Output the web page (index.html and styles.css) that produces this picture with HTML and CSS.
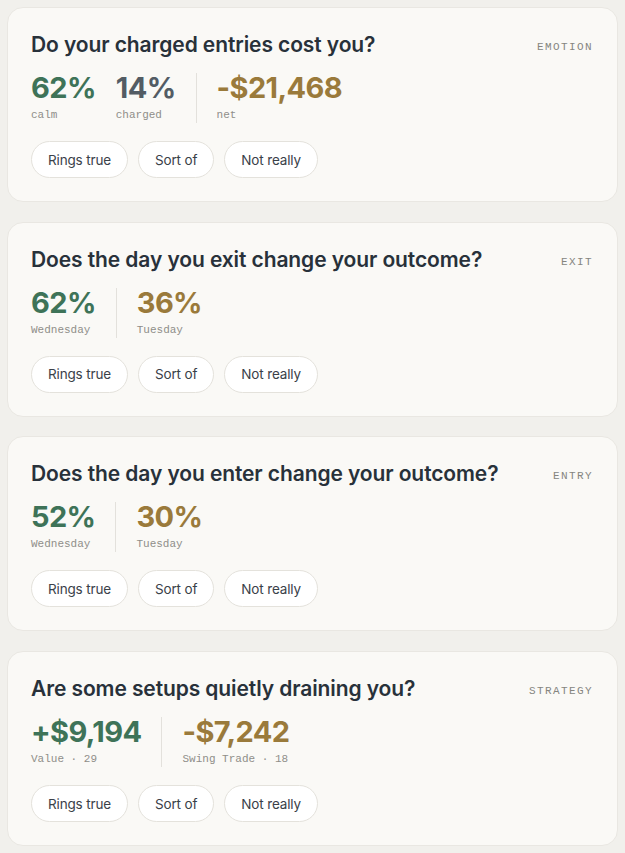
FILE: index.html
```html
<!DOCTYPE html>
<html lang="en">
<head>
  <meta charset="UTF-8">
  <meta name="viewport" content="width=device-width, initial-scale=1.0">
  <title>Reflections</title>
  <link rel="stylesheet" href="styles.css">
</head>
<body>
  <div class="deck">
    <div class="card">
      <div class="card-head">
        <h2 class="question">Do your charged entries cost you?</h2>
        <span class="tag">EMOTION</span>
      </div>
      <div class="stats">
        <div class="group">
          <div class="stat">
            <div class="num good">62%</div>
            <div class="label">calm</div>
          </div>
          <div class="stat">
            <div class="num muted">14%</div>
            <div class="label">charged</div>
          </div>
        </div>
        <div class="group">
          <div class="stat">
            <div class="num warn">-$21,468</div>
            <div class="label">net</div>
          </div>
        </div>
      </div>
      <div class="answers">
        <button class="answer">Rings true</button>
        <button class="answer">Sort of</button>
        <button class="answer">Not really</button>
      </div>
    </div>

    <div class="card">
      <div class="card-head">
        <h2 class="question">Does the day you exit change your outcome?</h2>
        <span class="tag">EXIT</span>
      </div>
      <div class="stats">
        <div class="group">
          <div class="stat">
            <div class="num good">62%</div>
            <div class="label">Wednesday</div>
          </div>
        </div>
        <div class="group">
          <div class="stat">
            <div class="num warn">36%</div>
            <div class="label">Tuesday</div>
          </div>
        </div>
      </div>
      <div class="answers">
        <button class="answer">Rings true</button>
        <button class="answer">Sort of</button>
        <button class="answer">Not really</button>
      </div>
    </div>

    <div class="card">
      <div class="card-head">
        <h2 class="question">Does the day you enter change your outcome?</h2>
        <span class="tag">ENTRY</span>
      </div>
      <div class="stats">
        <div class="group">
          <div class="stat">
            <div class="num good">52%</div>
            <div class="label">Wednesday</div>
          </div>
        </div>
        <div class="group">
          <div class="stat">
            <div class="num warn">30%</div>
            <div class="label">Tuesday</div>
          </div>
        </div>
      </div>
      <div class="answers">
        <button class="answer">Rings true</button>
        <button class="answer">Sort of</button>
        <button class="answer">Not really</button>
      </div>
    </div>

    <div class="card">
      <div class="card-head">
        <h2 class="question">Are some setups quietly draining you?</h2>
        <span class="tag">STRATEGY</span>
      </div>
      <div class="stats">
        <div class="group">
          <div class="stat">
            <div class="num good">+$9,194</div>
            <div class="label">Value · 29</div>
          </div>
        </div>
        <div class="group">
          <div class="stat">
            <div class="num warn">-$7,242</div>
            <div class="label">Swing Trade · 18</div>
          </div>
        </div>
      </div>
      <div class="answers">
        <button class="answer">Rings true</button>
        <button class="answer">Sort of</button>
        <button class="answer">Not really</button>
      </div>
    </div>
  </div>
</body>
</html>
```

FILE: styles.css
```css
body {
  margin: 0;
  padding: 7px;
  background-color: #f1f0ec;
  font-family: 'Inter', sans-serif;
  color: #2a3138;
}

.deck {
  display: flex;
  flex-direction: column;
  gap: 19.7px;
}

.card {
  background-color: #faf9f6;
  border: 1px solid #e9e7e2;
  border-radius: 16px;
  padding: 24px 24px 23px 23px;
}

.card-head {
  display: flex;
  justify-content: space-between;
  align-items: center;
  height: 26px;
}

.question {
  margin: 0;
  font-size: 21px;
  font-weight: 600;
  line-height: 26px;
  letter-spacing: -0.1px;
  color: #28313a;
}

.tag {
  font-family: 'Liberation Mono', monospace;
  font-size: 11px;
  letter-spacing: 1.4px;
  color: #85857f;
  margin-top: 4px;
}

.stats {
  display: flex;
  margin-top: 15px;
  height: 50px;
}

.group {
  display: flex;
  gap: 20px;
  padding-right: 20px;
}

.group + .group {
  border-left: 1px solid #e3e1dc;
  padding-left: 20px;
}

.num {
  font-size: 29px;
  font-weight: 700;
  line-height: 30px;
  letter-spacing: -0.6px;
}

.good { color: #3e7358; }
.muted { color: #535c64; }
.warn { color: #9a7a3b; }

.label {
  margin-top: 4px;
  font-family: 'Liberation Mono', monospace;
  font-size: 11px;
  line-height: 16px;
  color: #8f8e89;
}

.answers {
  display: flex;
  gap: 10px;
  margin-top: 18px;
}

.answer {
  height: 37px;
  padding: 0 16px;
  background-color: #fff;
  border: 1px solid #e4e2dc;
  border-radius: 19px;
  font-family: 'Inter', sans-serif;
  font-size: 13.5px;
  letter-spacing: -0.15px;
  color: #3a4149;
  cursor: pointer;
}
```
